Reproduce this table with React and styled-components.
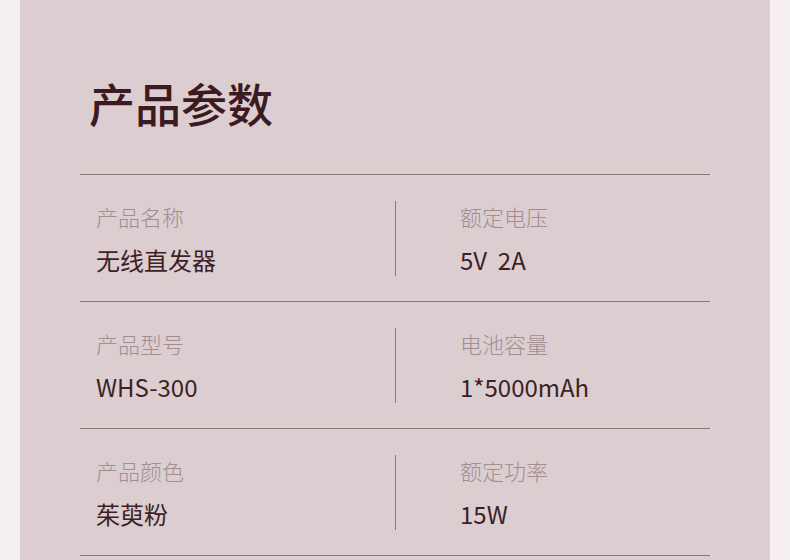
import React from 'react'
import styled, { createGlobalStyle } from 'styled-components'

const GlobalStyle = createGlobalStyle`
  html, body {
    margin: 0;
    padding: 0;
    background: #f6eff0;
  }
  body {
    font-family: 'Noto Sans CJK SC', 'Noto Sans', sans-serif;
  }
`

const specs = [
  [
    { label: '产品名称', value: '无线直发器' },
    { label: '额定电压', value: '5V  2A' },
  ],
  [
    { label: '产品型号', value: 'WHS-300' },
    { label: '电池容量', value: '1*5000mAh' },
  ],
  [
    { label: '产品颜色', value: '茱萸粉' },
    { label: '额定功率', value: '15W' },
  ],
]

export default () => (
  <Page>
    <GlobalStyle />
    <Panel>
      <Title>产品参数</Title>
      <Table>
        {specs.map((row, i) => (
          <Row key={i}>
            {row.map((cell, j) => (
              <Cell key={cell.label} right={j === 1}>
                <Label>{cell.label}</Label>
                <Value>{cell.value}</Value>
              </Cell>
            ))}
          </Row>
        ))}
      </Table>
    </Panel>
  </Page>
)

const Page = styled.div`
  width: 790px;
  height: 560px;
  overflow: hidden;
  padding: 0 20px;
  box-sizing: border-box;
`

const Panel = styled.section`
  width: 750px;
  height: 560px;
  background: #dccdd0;
  padding: 80px 60px 0;
  box-sizing: border-box;
`

const Title = styled.h1`
  margin: 0 0 49px 9px;
  font-size: 46px;
  line-height: 45px;
  font-weight: 500;
  color: #3b1a21;
`

const Table = styled.div`
  width: 630px;
  border-bottom: 1px solid #8c7479;
`

const Row = styled.div`
  display: grid;
  grid-template-columns: 315px 315px;
  border-top: 1px solid #8c7479;
  padding: 26px 0 25px;
`

const Cell = styled.div`
  height: 75px;
  padding: 0 0 0 ${p => (p.right ? '64px' : '16px')};
  box-sizing: border-box;
  border-left: ${p => (p.right ? '1px solid #8c7479' : 'none')};
`

const Label = styled.div`
  font-size: 22px;
  line-height: 30px;
  font-weight: 300;
  color: #a18e93;
`

const Value = styled.div`
  margin-top: 14px;
  font-size: 24px;
  line-height: 30px;
  font-weight: 400;
  color: #3d1f26;
  white-space: pre;
`
